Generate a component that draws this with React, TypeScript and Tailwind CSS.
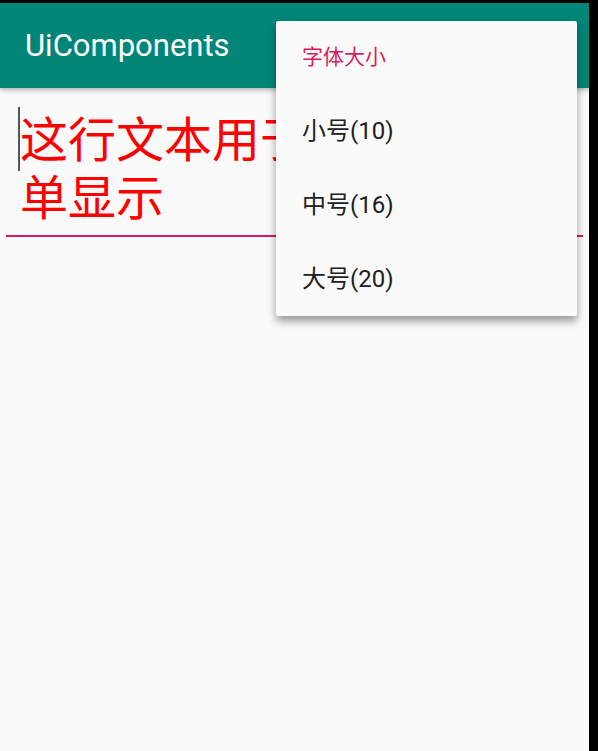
const sizes = ["小号(10)", "中号(16)", "大号(20)"];

export default function App() {
  return (
    <div
      className="relative flex h-[751px] w-[598px] flex-col overflow-hidden bg-black"
      style={{ fontFamily: 'Roboto, "Noto Sans CJK SC", sans-serif' }}
    >
      <div className="h-[3px] shrink-0" />
      <div className="flex flex-1">
        <main className="flex w-[589px] flex-col bg-[#fafafa]">
          <header className="relative z-10 flex h-[85px] shrink-0 items-center bg-[#008577] pl-[25px] pt-[2px] shadow-[0_2px_5px_rgba(0,0,0,0.3)]">
            <h1 className="text-[31px] font-normal text-white">UiComponents</h1>
          </header>

          <section className="px-[6px] pt-[24px]">
            <div className="border-b-2 border-[#d81b60] pb-[7px]">
              <div className="relative ml-[14px] w-[549px]">
                <span className="absolute -left-[2px] top-[-5px] h-[64px] w-[2px] bg-[#555]" />
                <p className="text-[48px] leading-[58px] text-[#ff0000]">
                  这行文本用于测试弹出菜单显示
                </p>
              </div>
            </div>
          </section>
        </main>
      </div>

      {/* popup menu */}
      <div className="absolute left-[276px] top-[21px] z-20 w-[301px] rounded-[2px] bg-[#fafafa] shadow-[0_5px_8px_rgba(0,0,0,0.4)]">
        <div className="flex h-[73px] items-center pl-[26px] text-[21px] text-[#d81b60]">
          字体大小
        </div>
        {sizes.map((s) => (
          <div
            key={s}
            className="flex h-[74px] items-center pl-[26px] text-[24px] text-[#212121]"
          >
            {s}
          </div>
        ))}
      </div>
    </div>
  );
}
